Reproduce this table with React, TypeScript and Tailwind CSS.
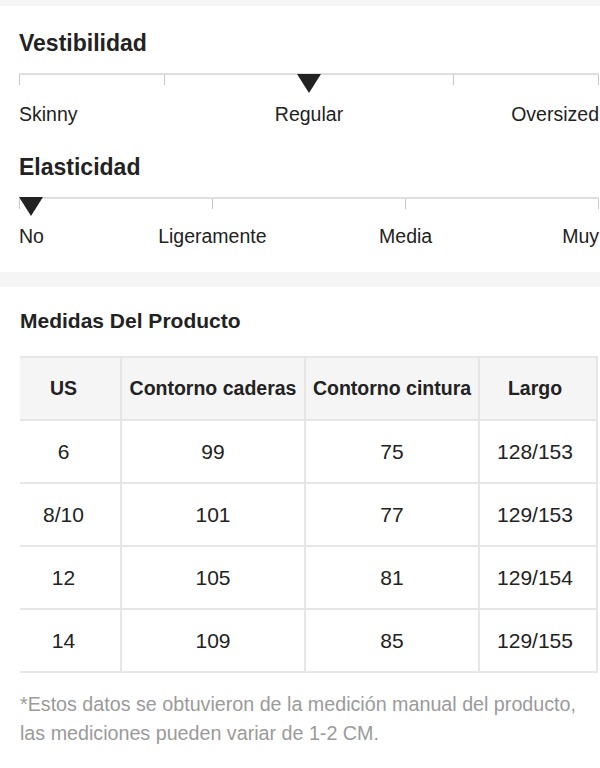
import React from "react";

const font = { fontFamily: '"Liberation Sans", Arial, sans-serif' };

function Triangle({ className }: { className: string }) {
  return (
    <div
      className={`absolute top-0 h-0 w-0 border-l-[12px] border-r-[12px] border-t-[19px] border-l-transparent border-r-transparent border-t-[#222] ${className}`}
    />
  );
}

function Tick({ grow, last }: { grow: string; last?: boolean }) {
  return (
    <div
      className={`h-[10px] ${grow} border-l border-[#c8c8c8] ${last ? "border-r" : ""}`}
    />
  );
}

const rows = [
  ["6", "99", "75", "128/153"],
  ["8/10", "101", "77", "129/153"],
  ["12", "105", "81", "129/154"],
  ["14", "109", "85", "129/155"],
];

const colW = ["w-[102px] pr-[13px]", "w-[184px]", "w-[174px]", "w-[118px] pr-[6px]"];

export default function App() {
  return (
    <div className="w-[600px] bg-white text-[#222]" style={font}>
      <div className="h-[6px] bg-[#f5f5f5]" />

      {/* Vestibilidad */}
      <h2 className="ml-[19px] mt-[23px] text-[23px] font-bold leading-[28px] text-[#222]">
        Vestibilidad
      </h2>
      <div className="relative ml-[19px] mt-[16px] w-[580px]">
        <div className="flex border-t-2 border-[#dedede]">
          <Tick grow="flex-[1]" />
          <Tick grow="flex-[2]" />
          <Tick grow="flex-[1]" last />
        </div>
        <Triangle className="left-1/2 -translate-x-1/2 top-[1px]" />
      </div>
      <div className="ml-[19px] mt-[17px] grid w-[580px] grid-cols-3 text-[19.5px] leading-[24px] text-[#222]">
        <span className="text-left">Skinny</span>
        <span className="text-center">Regular</span>
        <span className="text-right">Oversized</span>
      </div>

      {/* Elasticidad */}
      <h2 className="ml-[19px] mt-[27px] text-[23px] font-bold leading-[28px] text-[#222]">
        Elasticidad
      </h2>
      <div className="relative ml-[19px] mt-[16px] w-[580px]">
        <div className="flex border-t-2 border-[#dedede]">
          <Tick grow="flex-1" />
          <Tick grow="flex-1" />
          <Tick grow="flex-1" last />
        </div>
        <Triangle className="left-0" />
      </div>
      <div className="ml-[19px] mt-[15px] grid w-[580px] grid-cols-6 text-[19.5px] leading-[24px] text-[#222]">
        <span className="text-left">No</span>
        <span className="col-span-2 text-center">Ligeramente</span>
        <span className="col-span-2 text-center">Media</span>
        <span className="text-right">Muy</span>
      </div>

      <div className="mt-[24px] h-[15px] bg-[#f5f5f5]" />

      {/* Medidas */}
      <h3 className="ml-[20px] mt-[20px] text-[21px] font-bold leading-[28px] text-[#222]">
        Medidas Del Producto
      </h3>
      <div className="ml-[20px] mt-[21px] w-[578px] border-t-2 border-[#e6e6e6]">
        <div className="flex h-[63px] border-b-2 border-[#e6e6e6] bg-[#f5f5f5] text-[19.5px] font-bold">
          {["US", "Contorno caderas", "Contorno cintura", "Largo"].map((h, i) => (
            <div
              key={h}
              className={`${colW[i]} flex items-center justify-center whitespace-nowrap border-r-2 border-[#e6e6e6]`}
            >
              {h}
            </div>
          ))}
        </div>
        {rows.map((r) => (
          <div key={r[0]} className="flex h-[63px] border-b-2 border-[#e6e6e6] text-[21px]">
            {r.map((c, i) => (
              <div
                key={i}
                className={`${colW[i]} flex items-center justify-center border-r-2 border-[#e6e6e6]`}
              >
                {c}
              </div>
            ))}
          </div>
        ))}
      </div>

      <p className="mx-[20px] mt-[17px] pb-[20px] text-[19.7px] leading-[29px] text-[#9a9a9a]">
        *Estos datos se obtuvieron de la medición manual del producto, las mediciones pueden variar de 1-2 CM.
      </p>
    </div>
  );
}
